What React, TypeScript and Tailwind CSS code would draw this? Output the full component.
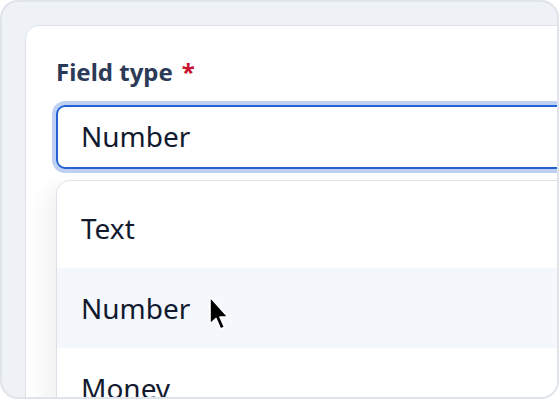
import { useState } from 'react';

const OPTIONS = ['Text', 'Number', 'Money'];

function Cursor() {
  return (
    <svg
      className="absolute left-[205px] top-[292px]"
      width="26"
      height="38"
      viewBox="0 0 26 38"
    >
      <path
        d="M3 3 L3 30 L9 24.5 L13.5 35 L17.5 33.2 L13 23 L21 23 Z"
        fill="#000"
        stroke="#fff"
        strokeWidth="1.6"
        strokeLinejoin="round"
      />
    </svg>
  );
}

export default function App() {
  const [value] = useState('Number');

  return (
    <div className="w-[560px] h-[400px] bg-white" style={{ fontFamily: '"Noto Sans", "Open Sans", sans-serif' }}>
      <div className="relative w-[559px] h-[399px] overflow-hidden rounded-[18px] border-2 border-[#dfe4ec] bg-[#eef1f6] pt-[23px] pl-[23px]">
        <div className="h-[420px] w-[600px] rounded-tl-[14px] border border-[#dde2ea] bg-white pl-[30px] pt-[32px]">
          {/* Label */}
          <label className="flex items-center gap-[9px] text-[24px] font-bold leading-[28px] text-[#2c3a57]">
            Field type <span className="text-[#c8102e]">*</span>
          </label>

          {/* Select input */}
          <div className="mt-[19px] flex h-[64px] items-center rounded-[9px] border-2 border-[#2461d2] pb-[2px] pl-[23px] text-[28px] text-[#111a2e] ring-4 ring-[#bfd1f3]">
            {value}
          </div>

          {/* Options */}
          <div className="mt-[11px] rounded-tl-[14px] border border-[#dde2ea] bg-white py-[7px] shadow-[-10px_8px_24px_rgba(15,23,42,0.06)]">
            {OPTIONS.map((opt) => (
              <div
                key={opt}
                className={`flex h-[80px] items-center pl-[24px] text-[28px] text-[#111a2e] ${
                  opt === value ? 'bg-[#f4f7fc]' : ''
                }`}
              >
                {opt}
              </div>
            ))}
          </div>
        </div>
        <Cursor />
      </div>
    </div>
  );
}
